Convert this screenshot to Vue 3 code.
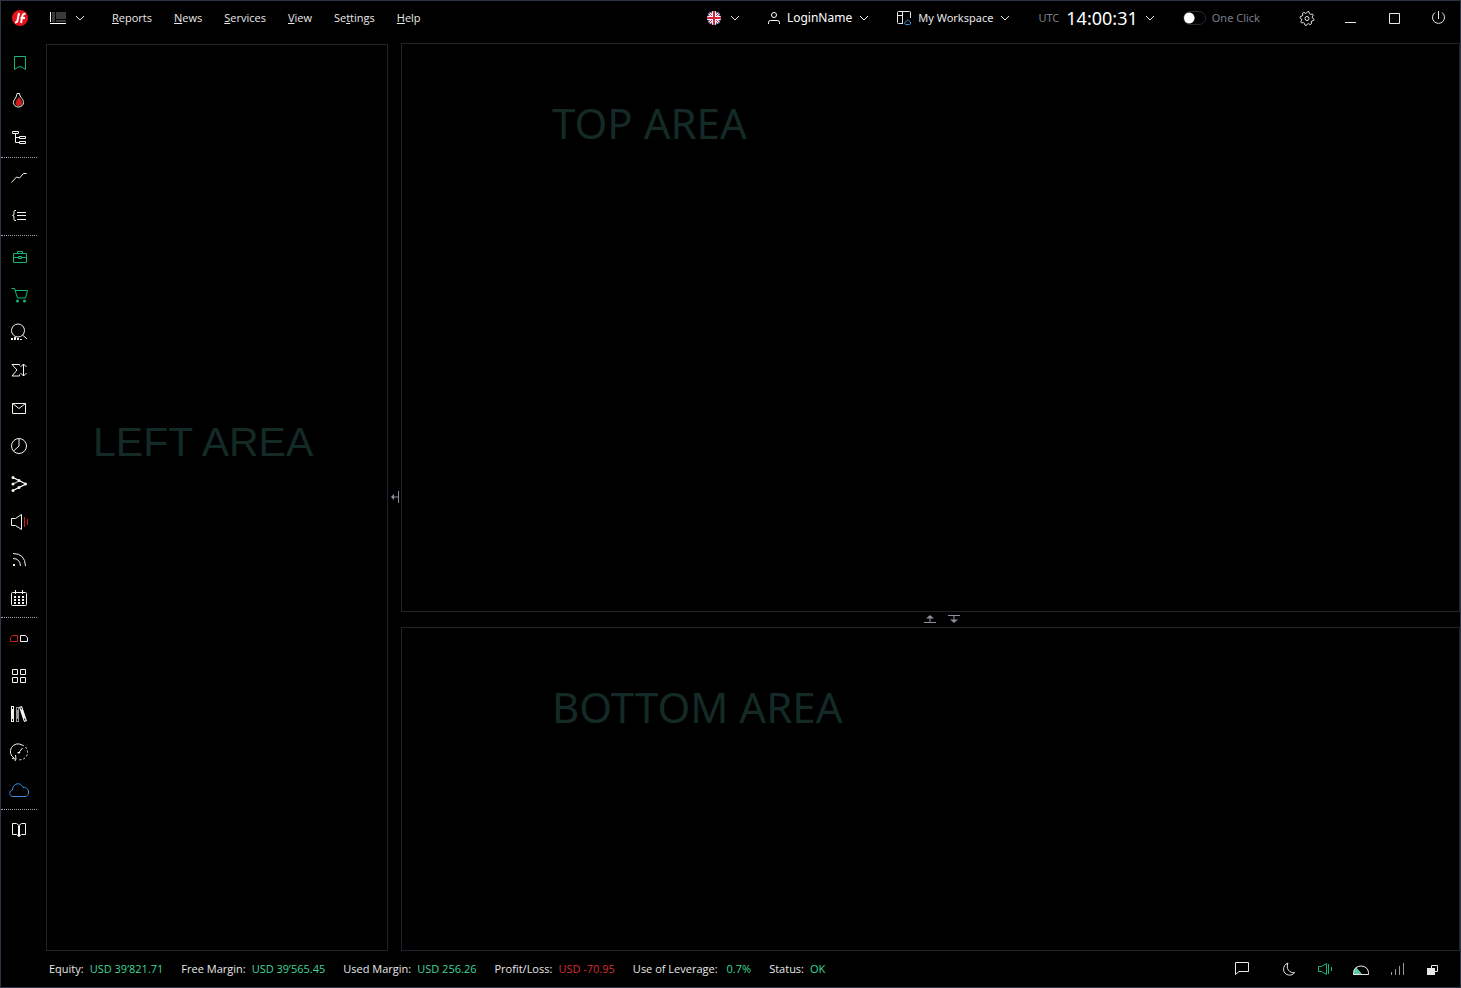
<script setup>
import { ref } from 'vue'

const oneClick = ref(false)

const menu = [
  { pre: '', key: 'R', post: 'eports' },
  { pre: '', key: 'N', post: 'ews' },
  { pre: '', key: 'S', post: 'ervices' },
  { pre: '', key: 'V', post: 'iew' },
  { pre: 'Se', key: 't', post: 'tings' },
  { pre: '', key: 'H', post: 'elp' }
]

// outline of the settings gear, four points per tooth
const gearPath = () => {
  const teeth = 8
  const points = []
  for (let i = 0; i < teeth * 4; i++) {
    const radius = i % 4 < 2 ? 7 : 5.4
    const angle = (i + 0.5) * Math.PI * 2 / (teeth * 4)
    points.push((13 + radius * Math.cos(angle)).toFixed(1) + ' ' + (12.5 + radius * Math.sin(angle)).toFixed(1))
  }
  return 'M' + points.join('L') + 'z'
}

// every tool is a list of paths on a 24x24 grid
const toolGroups = [
  [
    { name: 'Bookmarks', color: 'green', paths: [{ d: 'M7.5 6.5h11v13l-3-2-2.500-1-2.500 1-3 2z' }] },
    {
      name: 'Hot', color: 'white', paths: [
        { d: 'M12 9c-1.500 2-3.500 4-3.500 6 0 2 1.500 3 3.500 3s3.500-1 3.500-3c0-2-2-4-3.500-6z', cls: 'fill-red' },
        { d: 'M10 5.500h2.500c0 2 1 3 2.500 5 1 1.500 1.500 2.500 1.500 4 0 2.500-2 4.500-5 4.500s-5-2-5-4.500c0-2 1-3 2-4.500s1-2.500 1.500-4.500z' }
      ]
    },
    { name: 'Tree', color: 'white', paths: [{ d: 'M5.500 5.500h6v2h-6zM8.500 7.500v9h4M8.500 11.500h4M12.500 10.500h6v2h-6zM12.500 15.500h6v2h-6z' }] }
  ],
  [
    { name: 'Chart', color: 'white', paths: [{ d: 'M4.500 16.500l5-5.500 3 1 4-4.500h3' }] },
    { name: 'Code', color: 'white', paths: [{ d: 'M9 6.500H8q-1 0-1 1V10q0 1.500-1.500 1.500Q7 11.500 7 13v2.500q0 1 1 1h1M10 8.500h9M10 11.500h9M10 15.500h9' }] }
  ],
  [
    { name: 'Portfolio', color: 'green', paths: [{ d: 'M6.500 9.500h13v9h-13zM10.500 9.500v-2h5v2M6.500 13.500h5M14.500 13.500h5M11.500 12.500h3v2h-3z' }] },
    { name: 'Orders', color: 'green', paths: [{ d: 'M4.500 6.500h3l3 9.500h8l2-7.500H8' }, { d: 'M9 19a1.500 1.500 0 1 0 3 0a1.500 1.500 0 1 0-3 0M16 19a1.500 1.500 0 1 0 3 0a1.500 1.500 0 1 0-3 0', cls: 'fill' }] },
    { name: 'Search', color: 'white', paths: [{ d: 'M4.500 10.500a6.500 6.500 0 1 0 13 0a6.500 6.500 0 1 0-13 0M15.500 15l4.500 4' }, { d: 'M4 18h2v2H4zM7 17h2v3H7zM10 18h2v2h-2zM13 19h2v1h-2z', cls: 'fill' }] },
    { name: 'Summary', color: 'white', paths: [{ d: 'M12.500 7.500V6.500H5l5 5.500-5 6h7.500v-1.500M16.500 6v12M13.500 9l3-3 3 3M13.500 15l3 3 3-3' }] },
    { name: 'Messages', color: 'white', paths: [{ d: 'M5.500 7.500h13v10h-13zM5.500 7.500l6.500 5 6.500-5' }] },
    { name: 'Exposure', color: 'white', paths: [{ d: 'M4.500 12a7.500 7.500 0 1 0 15 0a7.500 7.500 0 1 0-15 0M12 4.500V12l-5.500 5' }] },
    { name: 'Patterns', color: 'white', paths: [{ d: 'M6 5.500l13 6.500-13 6.500M6 12l6-3' }, { d: 'M4.500 5.500a1.500 1.500 0 1 0 3 0a1.500 1.500 0 1 0-3 0M4.500 12a1.500 1.500 0 1 0 3 0a1.500 1.500 0 1 0-3 0M4.500 18.500a1.500 1.500 0 1 0 3 0a1.500 1.500 0 1 0-3 0M10.500 8.500a1.500 1.500 0 1 0 3 0a1.500 1.500 0 1 0-3 0M10.500 15.500a1.500 1.500 0 1 0 3 0a1.500 1.500 0 1 0-3 0M17 12a1.500 1.500 0 1 0 3 0a1.500 1.500 0 1 0-3 0', cls: 'fill' }, { d: 'M6 5.500l13 6.500-13 6.500' }] },
    { name: 'Alerts', color: 'white', paths: [{ d: 'M4.500 8.500h4l6-4v15l-6-4h-4z' }, { d: 'M17.500 7v10M20.500 9v6', cls: 'red' }] },
    { name: 'News feed', color: 'white', paths: [{ d: 'M6 5.500q12 0 12.500 12.500M6 10.500q7 0 7.500 7.500' }, { d: 'M6 16h2v2H6z', cls: 'fill' }] },
    { name: 'Calendar', color: 'white', paths: [{ d: 'M5.500 6.500h13q1 0 1 1v11q0 1-1 1h-13q-1 0-1-1v-11q0-1 1-1zM8.500 4v4M15.500 4v4' }, { d: 'M7 10h2v2H7zM11 10h2v2h-2zM15 10h2v2h-2zM7 13h2v2H7zM11 13h2v2h-2zM15 13h2v2h-2zM7 16h2v2H7zM11 16h2v2h-2zM15 16h2v2h-2z', cls: 'fill' }] }
  ],
  [
    { name: 'Compare', color: 'white', paths: [{ d: 'M10.500 9.500v6h-7V12l2-2.500z', cls: 'red' }, { d: 'M13.500 9.500v6h7V12l-2-2.500z' }] },
    { name: 'Widgets', color: 'white', paths: [{ d: 'M5.500 5.500h5v5h-5zM13.500 5.500h5v5h-5zM5.500 13.500h5v5h-5zM13.500 13.500h5v5h-5z' }] },
    {
      name: 'Library', color: 'white', paths: [
        { d: 'M9 5h3v15H9z', cls: 'fill-dim' },
        { d: 'M4 4h3v16H4zM12 5l3-1 5 15-3 1z', cls: 'fill' },
        { d: 'M5.500 5v2M5.500 17v2M10.500 6v2M10.500 17v2M14 5.500l.500 2M17.500 16.500l.500 2', cls: 'cut' }
      ]
    },
    { name: 'Tester', color: 'white', paths: [{ d: 'M15 5A7.500 7.500 0 0 0 7 18M5 18.500l4 .500-.500-4M9 19l-1 2' }, { d: 'M15 5A7.500 7.500 0 0 1 11 19.500', cls: 'dashed' }, { d: 'M11.500 13l4-5' }, { d: 'M10 12l2 2 1.500-2z', cls: 'fill' }] },
    { name: 'Cloud', color: 'blue', paths: [{ d: 'M6 18.500c-4 0-4.500-6-.500-6.500 0-7 8.500-8.500 10.500-2.500 4-.500 6 3 5.500 5.500 0 2-1.500 3.500-3.500 3.500z' }] }
  ],
  [
    { name: 'Manual', color: 'white', paths: [{ d: 'M12 7.500L9.500 5.500h-4v11h4l2.500 2 2.500-2h4v-11h-4zM12 7.500v11' }, { d: 'M11.500 8v10M12.500 8v10' }] }
  ]
]

const account = [
  { label: 'Equity:', value: 'USD 39’821.71' },
  { label: 'Free Margin:', value: 'USD 39’565.45' },
  { label: 'Used Margin:', value: 'USD 256.26' },
  { label: 'Profit/Loss:', value: 'USD -70.95', loss: true },
  { label: 'Use of Leverage:', value: '0.7%', wide: true },
  { label: 'Status:', value: 'OK' }
]
</script>

<template>
  <div class="app">
    <header class="topbar">
      <svg class="logo" viewBox="0 0 16 16" aria-hidden="true">
        <circle cx="8" cy="8" r="8" fill="#e3141b" />
        <path d="M7 3L5.500 10.500Q5 12.500 3 12.500M9 13l1.500-7.500Q11 3.500 13.500 3.800M8.500 8h4.500" fill="none" stroke="#fff" stroke-width="2" />
      </svg>
      <button class="drop layout-drop" aria-label="Layout">
        <svg class="layout-icon" viewBox="0 0 16 12">
          <path d="M2 0h3v10H2zM6 0h10v7H6zM6 8h10v2H6z" fill="#3a3a3a" />
          <path d="M.5 0v10M0 11.500h16" stroke="#fff" />
        </svg>
        <svg class="chevron" viewBox="0 0 10 6"><path d="M1 1l4 4 4-4" /></svg>
      </button>
      <nav class="menu">
        <a v-for="item in menu" :key="item.key" href="#">{{ item.pre }}<u>{{ item.key }}</u>{{ item.post }}</a>
      </nav>

      <div class="session">
        <button class="drop flag-drop" aria-label="Language">
          <svg class="flag" viewBox="0 0 14 14">
            <clipPath id="round"><circle cx="7" cy="7" r="7" /></clipPath>
            <g clip-path="url(#round)">
              <path d="M0 0h14v14H0z" fill="#23407e" />
              <path d="M0 0l14 14M14 0L0 14" stroke="#fff" stroke-width="3" />
              <path d="M0 0l14 14M14 0L0 14" stroke="#d8203c" />
              <path d="M7 0v14M0 7h14" stroke="#fff" stroke-width="4" />
              <path d="M7 0v14M0 7h14" stroke="#d8203c" stroke-width="2" />
            </g>
          </svg>
          <svg class="chevron" viewBox="0 0 10 6"><path d="M1 1l4 4 4-4" /></svg>
        </button>
        <button class="drop login">
          <svg class="user" viewBox="0 0 12 14">
            <path d="M3.500 4a2.500 2.500 0 1 0 5 0a2.500 2.500 0 1 0-5 0M.5 13v-1.500q0-2 2-2h7q2 0 2 2V13" />
          </svg>
          <span>LoginName</span>
          <svg class="chevron" viewBox="0 0 10 6"><path d="M1 1l4 4 4-4" /></svg>
        </button>
        <button class="drop">
          <svg class="workspace" viewBox="0 0 14 14">
            <path d="M6 12.500H1.500q-1 0-1-1v-10q0-1 1-1h11q1 0 1 1V7M5.500.5v12M.5 4.500h5" />
            <path class="blue" d="M9 13.500c-2 0-2-2.500 0-2.500.5-2.500 3-2.500 3.500-.5 1.500 0 1.500 3 0 3z" />
          </svg>
          <span>My Workspace</span>
          <svg class="chevron" viewBox="0 0 10 6"><path d="M1 1l4 4 4-4" /></svg>
        </button>
        <button class="drop">
          <span class="zone">UTC</span>
          <span class="time">14:00:31</span>
          <svg class="chevron" viewBox="0 0 10 6"><path d="M1 1l4 4 4-4" /></svg>
        </button>
        <label class="one-click">
          <input type="checkbox" v-model="oneClick">
          <span>One Click</span>
        </label>
      </div>

      <div class="window-buttons">
        <button aria-label="Preferences">
          <svg viewBox="0 0 24 24">
            <path :d="gearPath()" />
            <path d="M11 12.500a2 2 0 1 0 4 0a2 2 0 1 0-4 0" />
          </svg>
        </button>
        <button aria-label="Minimize"><svg viewBox="0 0 24 24"><path d="M7 16.500h11" /></svg></button>
        <button aria-label="Maximize"><svg viewBox="0 0 24 24"><path d="M7.500 7.500h10v10h-10z" /></svg></button>
        <button aria-label="Exit"><svg viewBox="0 0 24 24"><path d="M12.500 5v8M9 6.500a6 6 0 1 0 7 0" /></svg></button>
      </div>
    </header>

    <main class="workarea">
      <aside class="tools">
        <div v-for="(group, i) in toolGroups" :key="i" class="tool-group">
          <button v-for="tool in group" :key="tool.name" :class="tool.color" :aria-label="tool.name">
            <svg viewBox="0 0 24 24">
              <path v-for="(path, n) in tool.paths" :key="n" :d="path.d" :class="path.cls" />
            </svg>
          </button>
        </div>
      </aside>

      <section class="panel left-panel">
        <h2>LEFT AREA</h2>
      </section>

      <button class="split-v" aria-label="Collapse left area">
        <svg viewBox="0 0 10 12">
          <path d="M8.500 0v12M3 6h5" />
          <path d="M1 6l3-3v6z" class="fill" />
        </svg>
      </button>

      <div class="right-column">
        <section class="panel">
          <h2>TOP AREA</h2>
        </section>
        <div class="split-h">
          <button aria-label="Expand bottom area">
            <svg viewBox="0 0 12 8">
              <path d="M0 7.500h12M6 3v4" />
              <path d="M2 3.500L6 0l4 3.500z" class="fill" />
            </svg>
          </button>
          <button aria-label="Expand top area">
            <svg viewBox="0 0 12 8">
              <path d="M0 .5h12M6 1v4" />
              <path d="M2 4.500L6 8l4-3.500z" class="fill" />
            </svg>
          </button>
        </div>
        <section class="panel">
          <h2>BOTTOM AREA</h2>
        </section>
      </div>
    </main>

    <footer class="statusbar">
      <dl class="account">
        <div v-for="item in account" :key="item.label" :class="{ wide: item.wide }">
          <dt>{{ item.label }}</dt>
          <dd :class="{ loss: item.loss }">{{ item.value }}</dd>
        </div>
      </dl>
      <div class="status-buttons">
        <button class="chat" aria-label="Chat"><svg viewBox="0 0 24 24"><path d="M5.500 5.500h13v9H9l-3.500 3z" /></svg></button>
        <button aria-label="Night mode"><svg viewBox="0 0 24 24"><path d="M11 6c-6 2-6 11 .5 12 2.500.5 5-.5 6-2.500-5 1-9-4-6.500-9.500z" /></svg></button>
        <button class="green" aria-label="Sound"><svg viewBox="0 0 24 24"><path d="M5.500 9.500h3l5-3v11l-5-3h-3zM15.500 7v10M18.500 10v4" /></svg></button>
        <button aria-label="Memory">
          <svg viewBox="0 0 24 24">
            <path d="M5 17v-4l2-3 6 7z" class="fill-green" />
            <path d="M4.500 17.500v-2a7.500 6.500 0 0 1 15 0v2z" />
          </svg>
        </button>
        <button aria-label="Connection">
          <svg viewBox="0 0 24 24">
            <path d="M6.500 15v3M10.500 12v6M14.500 9v9M18.500 6v12" class="dim" />
          </svg>
        </button>
        <button aria-label="Windows">
          <svg viewBox="0 0 24 24">
            <path d="M10.500 11V8.500h6v6H14" />
            <path d="M6 11h8v7H6z" class="fill" />
          </svg>
        </button>
      </div>
    </footer>
  </div>
</template>

<style>
body {
  margin: 0;
  background: #000;
}
</style>

<style scoped>
.app {
  min-height: 100vh;
  box-sizing: border-box;
  display: flex;
  flex-direction: column;
  border: 1px solid #2d3446;
  background: #000;
  color: #e8e8e8;
  font-family: "Noto Sans", "Open Sans", sans-serif;
  font-size: 11px;
  line-height: 16px;
}

button {
  display: flex;
  align-items: center;
  justify-content: center;
  padding: 0;
  border: 0;
  background: none;
  color: inherit;
  font: inherit;
}

svg {
  display: block;
  flex: none;
  fill: none;
  stroke: currentColor;
}

.topbar {
  display: flex;
  align-items: center;
  height: 34px;
  padding: 0 10px 0 11px;
}

.logo {
  width: 16px;
  height: 16px;
  stroke: none;
}

.drop {
  gap: 7px;
  white-space: nowrap;
}

.layout-drop {
  gap: 9px;
  margin-left: 22px;
}

.layout-icon {
  width: 16px;
  height: 12px;
  stroke: none;
}

.chevron {
  width: 10px;
  height: 6px;
}

.menu {
  display: flex;
  gap: 22px;
  margin-left: 27px;
  font-family: "Open Sans", "Noto Sans", sans-serif;
}

.menu a {
  color: inherit;
  text-decoration: none;
}

.session {
  display: flex;
  align-items: center;
  gap: 28px;
  margin-left: auto;
}

.flag-drop {
  gap: 9px;
}

.flag {
  width: 14px;
  height: 14px;
  stroke: none;
}

.user {
  width: 12px;
  height: 14px;
}

.login {
  color: #fff;
  font-size: 12px;
}

.workspace {
  width: 14px;
  height: 14px;
}

.zone {
  color: #7b7f8c;
}

.time {
  color: #fff;
  font-size: 18px;
}

.one-click {
  display: flex;
  align-items: center;
  gap: 6px;
  color: #7b7f8c;
}

.one-click input {
  appearance: none;
  box-sizing: border-box;
  width: 23px;
  height: 14px;
  margin: 0;
  border: 1px solid #24282f;
  border-radius: 7px;
  background: radial-gradient(circle at 5px 6px, #fff 5px, transparent 6px);
}

.one-click input:checked {
  background: radial-gradient(circle at 16px 6px, #12b76a 5px, transparent 6px);
}

.window-buttons {
  display: flex;
  gap: 20px;
  margin-left: 34px;
}

.window-buttons svg,
.status-buttons svg,
.tools svg {
  width: 24px;
  height: 24px;
}

.workarea {
  flex: 1;
  display: flex;
  padding-top: 8px;
}

.tools {
  width: 36px;
  margin-right: 9px;
}

.tool-group + .tool-group {
  padding-top: 1px;
  border-top: 1px dotted #a0a4ae;
}

.tools button {
  width: 100%;
  height: 38px;
}

.white {
  color: #f4f4f4;
}

.green {
  color: #14b877;
}

.blue {
  color: #3a8fe0;
  stroke: currentColor;
}

.red {
  stroke: #c8201e;
}

.dim {
  stroke: #999;
}

.cut {
  stroke: #000;
}

.dashed {
  stroke-dasharray: 2 2;
}

.fill {
  fill: currentColor;
  stroke: none;
}

.fill-dim {
  fill: #999;
  stroke: none;
}

.fill-red {
  fill: #c8201e;
  stroke: none;
}

.fill-green {
  fill: #5cc8a0;
  stroke: none;
}

.panel {
  box-sizing: border-box;
  border: 1px solid #22242d;
}

.panel h2 {
  margin: 0;
  color: #142a26;
  font-size: 42px;
  font-weight: 400;
  line-height: 58px;
}

.left-panel {
  display: flex;
  flex: 0 0 342px;
  align-items: center;
  margin-top: 1px;
  padding: 0 0 112px 46px;
}

.left-panel h2 {
  font-family: "Liberation Sans", Arial, sans-serif;
  font-size: 41px;
}

.split-v {
  width: 13px;
  color: #8b8f9e;
}

.split-v svg {
  width: 10px;
  height: 12px;
}

.right-column {
  flex: 1;
  display: grid;
  grid-template-rows: 569fr 15px 324fr;
}

.right-column .panel {
  padding: 50px 0 0 150px;
}

.split-h {
  display: flex;
  justify-content: center;
  gap: 12px;
  padding: 0 0 2px 23px;
  color: #8b8f9e;
}

.split-h svg {
  width: 12px;
  height: 8px;
}

.statusbar {
  display: flex;
  align-items: center;
  justify-content: space-between;
  height: 36px;
  padding: 0 15px 0 48px;
}

.account {
  display: flex;
  gap: 18px;
  margin: 0;
  font-family: "Open Sans", "Noto Sans", sans-serif;
}

.account div {
  display: flex;
  gap: 6px;
}

.account .wide {
  gap: 9px;
}

.account dd {
  margin: 0;
  color: #3fd69a;
}

.account .loss {
  color: #d92d2d;
}

.status-buttons {
  display: flex;
  gap: 12px;
}

.chat {
  margin-right: 11px;
}
</style>
